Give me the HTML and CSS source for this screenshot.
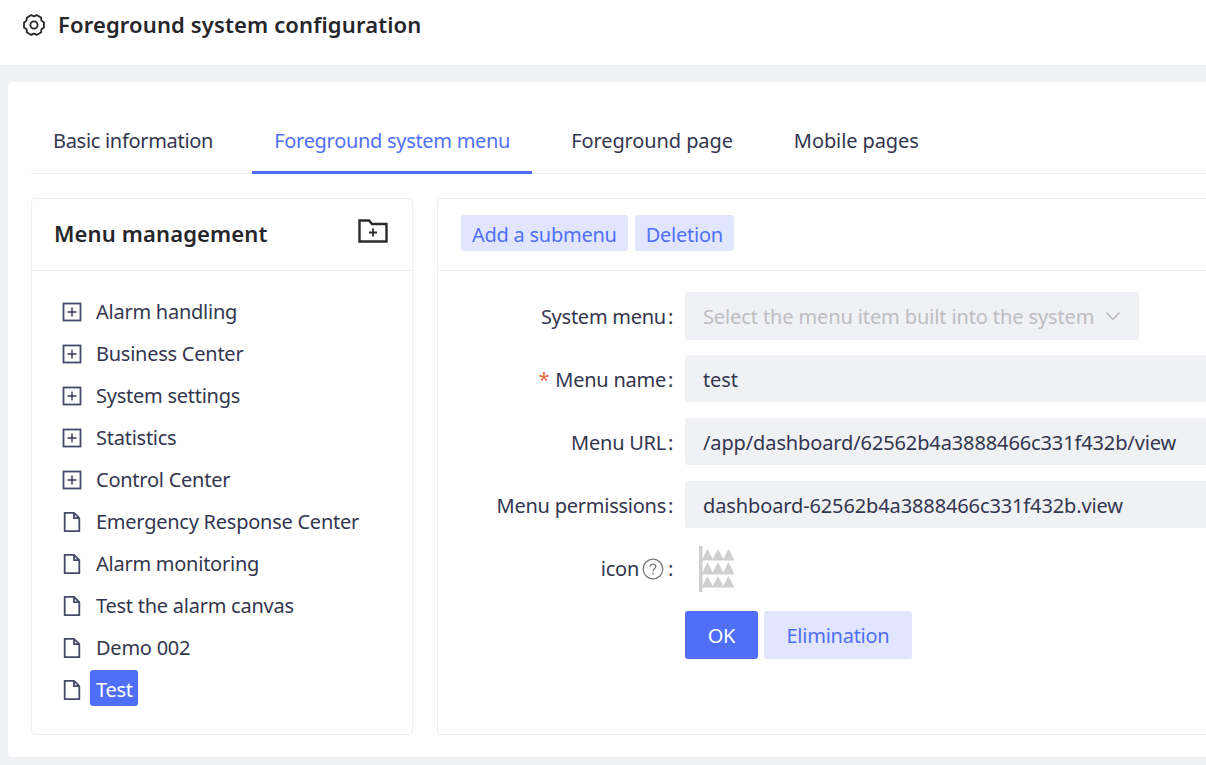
FILE: index.html
```html
<!DOCTYPE html>
<html>
	<head>
		<title>Foreground system configuration</title>
		<meta charset="UTF-8"/>
		<link rel="stylesheet" href="styles.css">
	</head>
	<body>
		<div class="pageHeader">
			<svg class="gearIcon" width="24" height="24" viewBox="0 0 24 24" fill="none" stroke="#26262b" stroke-width="1.8" stroke-linejoin="round">
				<path d="M21.95 9.33 L21.95 14.67 Q18.58 15.8 19.28 19.28 L14.67 21.95 Q12 19.6 9.33 21.95 L4.72 19.28 Q5.42 15.8 2.05 14.67 L2.05 9.33 Q5.42 8.2 4.72 4.72 L9.33 2.05 Q12 4.4 14.67 2.05 L19.28 4.72 Q18.58 8.2 21.95 9.33 Z"/>
				<circle cx="12" cy="12" r="3.6"/>
			</svg>
			<span class="pageTitle">Foreground system configuration</span>
		</div>
		<div class="pageBody">
			<div class="card">
				<div class="tabs">
					<div class="tab">Basic information</div>
					<div class="tab tabActive">Foreground system menu</div>
					<div class="tab tabLoose">Foreground page</div>
					<div class="tab tabLoose">Mobile pages</div>
				</div>
				<div class="columns">
					<div class="menuPanel">
						<div class="panelHead">
							<span class="panelTitle">Menu management</span>
							<svg class="folderIcon" width="32" height="26" viewBox="0 0 32 26" fill="none" stroke="#2b2b2e" stroke-width="2.4">
								<path d="M2.5 2.5 H12 L15 6 H29.5 V23.5 H2.5 Z"/>
								<path d="M16 10.5 V18.5 M12 14.5 H20" stroke-width="1.8"/>
							</svg>
						</div>
						<div class="tree">
							<div class="treeRow"><svg class="treeIcon" width="20" height="20" viewBox="0 0 20 20"><rect x="1.5" y="1.5" width="17" height="17" fill="none" stroke="#454a6a" stroke-width="1.8"/><path d="M10 5.5 V14.5 M5.5 10 H14.5" stroke="#33364f" stroke-width="1.4"/></svg><span class="treeText">Alarm handling</span></div>
							<div class="treeRow"><svg class="treeIcon" width="20" height="20" viewBox="0 0 20 20"><rect x="1.5" y="1.5" width="17" height="17" fill="none" stroke="#454a6a" stroke-width="1.8"/><path d="M10 5.5 V14.5 M5.5 10 H14.5" stroke="#33364f" stroke-width="1.4"/></svg><span class="treeText">Business Center</span></div>
							<div class="treeRow"><svg class="treeIcon" width="20" height="20" viewBox="0 0 20 20"><rect x="1.5" y="1.5" width="17" height="17" fill="none" stroke="#454a6a" stroke-width="1.8"/><path d="M10 5.5 V14.5 M5.5 10 H14.5" stroke="#33364f" stroke-width="1.4"/></svg><span class="treeText">System settings</span></div>
							<div class="treeRow"><svg class="treeIcon" width="20" height="20" viewBox="0 0 20 20"><rect x="1.5" y="1.5" width="17" height="17" fill="none" stroke="#454a6a" stroke-width="1.8"/><path d="M10 5.5 V14.5 M5.5 10 H14.5" stroke="#33364f" stroke-width="1.4"/></svg><span class="treeText">Statistics</span></div>
							<div class="treeRow"><svg class="treeIcon" width="20" height="20" viewBox="0 0 20 20"><rect x="1.5" y="1.5" width="17" height="17" fill="none" stroke="#454a6a" stroke-width="1.8"/><path d="M10 5.5 V14.5 M5.5 10 H14.5" stroke="#33364f" stroke-width="1.4"/></svg><span class="treeText">Control Center</span></div>
							<div class="treeRow"><svg class="treeIcon" width="20" height="20" viewBox="0 0 20 20" fill="none" stroke="#454a6a" stroke-width="1.8"><path d="M2.7 .9 H12 L17.3 6.2 V19.1 H2.7 Z M12 .9 V6.2 H17.3"/></svg><span class="treeText">Emergency Response Center</span></div>
							<div class="treeRow"><svg class="treeIcon" width="20" height="20" viewBox="0 0 20 20" fill="none" stroke="#454a6a" stroke-width="1.8"><path d="M2.7 .9 H12 L17.3 6.2 V19.1 H2.7 Z M12 .9 V6.2 H17.3"/></svg><span class="treeText">Alarm monitoring</span></div>
							<div class="treeRow"><svg class="treeIcon" width="20" height="20" viewBox="0 0 20 20" fill="none" stroke="#454a6a" stroke-width="1.8"><path d="M2.7 .9 H12 L17.3 6.2 V19.1 H2.7 Z M12 .9 V6.2 H17.3"/></svg><span class="treeText">Test the alarm canvas</span></div>
							<div class="treeRow"><svg class="treeIcon" width="20" height="20" viewBox="0 0 20 20" fill="none" stroke="#454a6a" stroke-width="1.8"><path d="M2.7 .9 H12 L17.3 6.2 V19.1 H2.7 Z M12 .9 V6.2 H17.3"/></svg><span class="treeText">Demo 002</span></div>
							<div class="treeRow"><svg class="treeIcon" width="20" height="20" viewBox="0 0 20 20" fill="none" stroke="#454a6a" stroke-width="1.8"><path d="M2.7 .9 H12 L17.3 6.2 V19.1 H2.7 Z M12 .9 V6.2 H17.3"/></svg><span class="treeText treeSelected">Test</span></div>
						</div>
					</div>
					<div class="formPanel">
						<div class="formHead">
							<button class="softButton smallButton">Add a submenu</button>
							<button class="softButton smallButton">Deletion</button>
						</div>
						<div class="formBody">
							<div class="formRow">
								<label class="formLabel">System menu</label><span class="colon">:</span>
								<div class="selectBox"><span>Select the menu item built into the system</span>
									<svg width="16" height="10" viewBox="0 0 16 10" fill="none" stroke="#b4b4b8" stroke-width="1.3"><path d="M1.5 1.5 L8 8.5 L14.5 1.5"/></svg>
								</div>
							</div>
							<div class="formRow">
								<label class="formLabel"><span class="required">*</span> Menu name</label><span class="colon">:</span>
								<div class="inputBox">test</div>
							</div>
							<div class="formRow">
								<label class="formLabel">Menu URL</label><span class="colon">:</span>
								<div class="inputBox">/app/dashboard/62562b4a3888466c331f432b/view</div>
							</div>
							<div class="formRow">
								<label class="formLabel">Menu permissions</label><span class="colon">:</span>
								<div class="inputBox">dashboard-62562b4a3888466c331f432b.view</div>
							</div>
							<div class="formRow iconRow">
								<label class="formLabel">icon<svg class="helpIcon" width="22" height="22" viewBox="0 0 22 22" fill="none" stroke="#77777b" stroke-width="1.3"><circle cx="11" cy="11" r="9.8"/><path d="M8.2 8.8 C8.2 5.2 13.8 5.2 13.8 8.6 C13.8 10.8 11 10.6 11 13.2"/><path d="M11 14.8 V16.4"/></svg></label><span class="colon">:</span>
								<svg class="chartIcon" width="36" height="47" viewBox="0 0 36 47" fill="#cfcfcf">
									<rect x="0" y="0" width="3.5" height="46"/>
									<rect x="3" y="13" width="32" height="1.5"/>
									<rect x="3" y="27" width="32" height="1.5"/>
									<rect x="3" y="40" width="32" height="1.5"/>
									<path d="M3 13.5 L8.5 3 L14 13.5 Z M13.5 13.5 L19 3 L24.5 13.5 Z M24 13.5 L29.5 3 L35 13.5 Z"/>
									<path d="M3 27 L8.5 16 L14 27 Z M13.5 27 L19 16 L24.5 27 Z M24 27 L29.5 16 L35 27 Z"/>
									<path d="M3 40.5 L8.5 30 L14 40.5 Z M13.5 40.5 L19 30 L24.5 40.5 Z M24 40.5 L29.5 30 L35 40.5 Z"/>
								</svg>
							</div>
							<div class="formActions">
								<button class="okButton">OK</button>
								<button class="softButton bigButton">Elimination</button>
							</div>
						</div>
					</div>
				</div>
			</div>
		</div>
	</body>
</html>
```

FILE: styles.css
```css
html, body {
	margin: 0;
	height: 100%;
	overflow: hidden;
}

body {
	background-color: #f0f1f5;
	font-family: "Noto Sans", "Open Sans", sans-serif;
	font-size: 20px;
	letter-spacing: -0.25px;
	color: #33364f;
	display: flex;
	flex-direction: column;
}

button {
	font-family: inherit;
	letter-spacing: inherit;
	border: 0;
	cursor: pointer;
}

/* Header */
.pageHeader {
	height: 65px;
	flex: none;
	background: #fff;
	display: flex;
	align-items: center;
	padding: 0 0 15px 22px;
	box-sizing: border-box;
}

.gearIcon {
	margin-right: 12px;
}

.pageTitle {
	font-size: 22px;
	font-weight: 600;
	letter-spacing: 0.13px;
	color: #26262b;
	white-space: nowrap;
	margin-bottom: 2px;
}

/* Body */
.pageBody {
	flex: 1;
	padding: 17px 0 8px 8px;
	min-height: 0;
	display: flex;
}

.card {
	flex: 1;
	background: #fff;
	border-radius: 4px 0 0 4px;
	padding: 35px 0 22px 23px;
	display: flex;
	flex-direction: column;
	min-width: 0;
}

.tabs {
	display: flex;
	height: 57px;
	flex: none;
	box-sizing: border-box;
	border-bottom: 1px solid #f0f0f2;
}

.tab {
	padding: 10px 22px 0 22px;
	margin-right: 17px;
	height: 57px;
	box-sizing: border-box;
	letter-spacing: -0.3px;
	white-space: nowrap;
}

.tabLoose {
	letter-spacing: -0.1px;
}

.tabActive {
	color: #4f6ffb;
	border-bottom: 3px solid #4f6ffb;
}

.columns {
	flex: 1;
	display: flex;
	gap: 24px;
	padding-top: 24px;
	min-height: 0;
}

/* Left panel */
.menuPanel {
	width: 382px;
	flex: none;
	box-sizing: border-box;
	border: 1px solid #f0f0f2;
	border-radius: 4px;
}

.panelHead {
	height: 72px;
	box-sizing: border-box;
	border-bottom: 1px solid #f0f0f2;
	display: flex;
	align-items: center;
	justify-content: space-between;
	padding: 0 23px 0 22px;
}

.panelTitle {
	font-size: 22px;
	font-weight: 600;
	letter-spacing: 0.13px;
	color: #26262b;
	margin-bottom: 4px;
}

.folderIcon {
	margin-top: -7px;
}

.tree {
	padding: 20px 0 0 30px;
}

.treeRow {
	height: 42px;
	display: flex;
	align-items: center;
}

.treeIcon {
	flex: none;
	margin-right: 8px;
}

.treeText {
	padding: 0 6px;
	height: 36px;
	line-height: 40px;
	margin-bottom: 4px;
	border-radius: 3px;
	white-space: nowrap;
}

.treeSelected {
	background: #4f6ffb;
	color: #fff;
	padding-right: 5px;
}

/* Right panel */
.formPanel {
	flex: 1;
	min-width: 0;
	border: 1px solid #f0f0f2;
	border-right: 0;
	border-radius: 4px 0 0 4px;
}

.formHead {
	height: 72px;
	box-sizing: border-box;
	border-bottom: 1px solid #f0f0f2;
	display: flex;
	align-items: center;
	gap: 7px;
	padding: 0 0 4px 23px;
}

.softButton {
	background: #e1e6fe;
	color: #4f6ffb;
	border-radius: 3px;
}

.smallButton {
	height: 36px;
	padding: 4px 11px 0 11px;
	font-size: 20px;
}

.formBody {
	padding-top: 21px;
}

.formRow {
	display: flex;
	align-items: center;
	height: 47px;
	margin-bottom: 16px;
}

.iconRow {
	margin-bottom: 20px;
}

.formLabel {
	width: 228px;
	flex: none;
	padding-top: 2px;
	text-align: right;
	white-space: nowrap;
	display: flex;
	justify-content: flex-end;
	align-items: center;
	gap: 6px;
}

.required {
	color: #e8683c;
}

.colon {
	width: 17px;
	flex: none;
	padding: 2px 0 0 2px;
}

.selectBox {
	width: 454px;
	height: 48px;
	align-self: flex-start;
	box-sizing: border-box;
	background: #f0f1f5;
	border-radius: 3px;
	padding: 0 18px 0 18px;
	display: flex;
	align-items: center;
	justify-content: space-between;
	color: #bdbdc0;
	letter-spacing: -0.12px;
	white-space: nowrap;
}

.inputBox {
	flex: 1;
	height: 47px;
	box-sizing: border-box;
	background: #f0f1f5;
	border-radius: 3px 0 0 3px;
	padding: 2px 18px 0 18px;
	display: flex;
	align-items: center;
	letter-spacing: -0.12px;
	white-space: nowrap;
}

.helpIcon {
	margin: 0 2px 0 -3px;
}

.chartIcon {
	margin: 3px 0 0 14px;
	flex: none;
}

.formActions {
	display: flex;
	gap: 6px;
	padding-left: 247px;
}

.okButton {
	width: 73px;
	height: 48px;
	background: #4f6ffb;
	color: #fff;
	border-radius: 3px;
	font-size: 20px;
}

.bigButton {
	width: 148px;
	height: 48px;
	font-size: 20px;
}
```
